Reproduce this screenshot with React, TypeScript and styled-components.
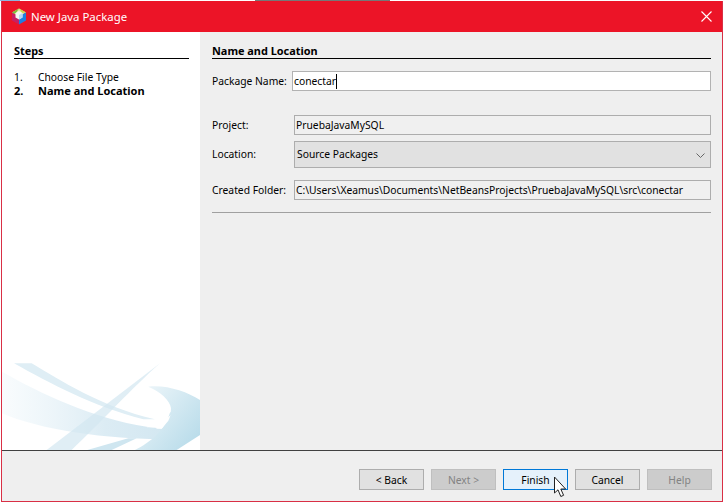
import styled, { createGlobalStyle } from 'styled-components';

const GlobalStyle = createGlobalStyle`
  html, body {
    margin: 0;
    padding: 0;
    width: 725px;
    height: 503px;
    overflow: hidden;
    background: #fff;
  }
  body {
    font-family: 'Noto Sans', 'Liberation Sans', sans-serif;
    font-size: 10.3px;
    color: #000;
  }
`;

const Desktop = styled.div`
  width: 725px;
  height: 503px;
  box-sizing: border-box;
  padding: 1px 2px 1px 1px;
  background:
    linear-gradient(90deg, #8fb4dc 0 20px, #fff 20px 255px, #777 255px 390px, #fff 390px) top left / 725px 1px no-repeat,
    #fff;
`;

const Window = styled.div`
  width: 722px;
  height: 501px;
  box-sizing: border-box;
  display: flex;
  flex-direction: column;
  border: 1px solid #d92f45;
  border-top: 0;
  background: #efefef;
`;

const TitleBar = styled.div`
  height: 31px;
  flex: none;
  display: flex;
  align-items: center;
  gap: 4px;
  padding: 0 10px 0 9px;
  background: #ec1427;
  color: #fff;
  font-size: 11.4px;
`;

const Title = styled.span`
  flex: 1;
`;

const Body = styled.div`
  flex: 1;
  min-height: 0;
  display: flex;
`;

const Sidebar = styled.div`
  width: 198px;
  flex: none;
  display: flex;
  flex-direction: column;
  justify-content: space-between;
  background: #fff;
`;

const StepsBlock = styled.div`
  padding: 11px 11px 0 12px;
`;

const Heading = styled.div`
  height: 15px;
  line-height: 15px;
  font-size: 10.9px;
  font-weight: 700;
  border-bottom: 1px solid #000;
`;

const StepList = styled.ol`
  list-style: none;
  margin: 11px 0 0;
  padding: 0;
`;

const Step = styled.li<{ $active?: boolean }>`
  display: flex;
  height: 14px;
  line-height: 14px;
  font-size: ${p => (p.$active ? '11px' : '10.3px')};
  font-weight: ${p => (p.$active ? 700 : 400)};
`;

const StepNumber = styled.span`
  width: 24px;
`;

const Swoosh = styled.svg`
  display: block;
  width: 198px;
  height: 87px;
`;

const Main = styled.div`
  flex: 1;
  padding: 11px 11px 0 12px;
`;

const Row = styled.div<{ $labelWidth: number; $height: number; $gap: number }>`
  display: grid;
  grid-template-columns: ${p => p.$labelWidth}px 1fr;
  align-items: center;
  height: ${p => p.$height}px;
  margin-top: ${p => p.$gap}px;
`;

const Field = styled.div<{ $editable?: boolean }>`
  height: 100%;
  box-sizing: border-box;
  display: flex;
  align-items: center;
  padding-left: 1px;
  border: 1px solid ${p => (p.$editable ? '#b2b2b2' : '#adadad')};
  background: ${p => (p.$editable ? '#fff' : '#f0f0f0')};
  white-space: nowrap;
`;

const Caret = styled.span`
  width: 1px;
  height: 15px;
  background: #000;
`;

const ComboLabel = styled.span`
  margin-bottom: 2px;
`;

const Combo = styled.div`
  height: 100%;
  box-sizing: border-box;
  display: flex;
  align-items: center;
  justify-content: space-between;
  padding: 0 5px 2px 2px;
  border: 1px solid #adadad;
  background: #e1e1e1;
`;

const Chevron = styled.svg`
  width: 9px;
  height: 5px;
  margin-top: 3px;
`;

const Separator = styled.div`
  height: 1px;
  margin-top: 12px;
  background: #a0a0a0;
`;

const Footer = styled.div`
  height: 51px;
  flex: none;
  box-sizing: border-box;
  position: relative;
  display: flex;
  justify-content: flex-end;
  gap: 7px;
  padding: 18px 10px 0 0;
  border-top: 1px solid #404040;
`;

const Button = styled.div<{ $variant?: 'disabled' | 'focused' }>`
  width: 65px;
  height: 21px;
  box-sizing: border-box;
  display: flex;
  align-items: center;
  justify-content: center;
  border: 1px solid ${p => (p.$variant === 'disabled' ? '#bfbfbf' : p.$variant === 'focused' ? '#0078d7' : '#adadad')};
  background: ${p => (p.$variant === 'disabled' ? '#cccccc' : p.$variant === 'focused' ? '#e5f1fb' : '#e1e1e1')};
  color: ${p => (p.$variant === 'disabled' ? '#838383' : '#000')};
`;

const Cursor = styled.svg`
  position: absolute;
  left: 551px;
  top: 25px;
  width: 14px;
  height: 22px;
`;

const NetBeansIcon = () => (
  <svg width="16" height="17" viewBox="0 0 16 17">
    <path d="M8 0.5 L15 4.5 L8 8.5 L1 4.5 Z" fill="#e8e6a0" />
    <path d="M8 0.5 L1 4.5 L1 7 L5 5 Z" fill="#7ebf3c" />
    <path d="M8 0.5 L15 4.5 L11 5 Z" fill="#c9d64a" />
    <path d="M1 4.5 L8 8.5 L8 16.5 L1 12.5 Z" fill="#c81e63" />
    <path d="M15 4.5 L8 8.5 L8 16.5 L15 12.5 Z" fill="#1f7fe0" />
    <path d="M4.5 5 L8 3 L11.5 5 L11.5 9.5 L8 11.5 L4.5 9.5 Z" fill="#f6f6f2" />
    <path d="M8 7 L11.5 5 L11.5 9.5 L8 11.5 Z" fill="#b9d6f2" />
  </svg>
);

const CloseIcon = () => (
  <svg width="11" height="11" viewBox="0 0 11 11">
    <path d="M0.5 0.5 L10.5 10.5 M10.5 0.5 L0.5 10.5" stroke="#fff" strokeWidth="1.1" />
  </svg>
);

export default function App() {
  return (
    <>
      <GlobalStyle />
      <Desktop>
        <Window>
          <TitleBar>
            <NetBeansIcon />
            <Title>New Java Package</Title>
            <CloseIcon />
          </TitleBar>
          <Body>
            <Sidebar>
              <StepsBlock>
                <Heading>Steps</Heading>
                <StepList>
                  <Step>
                    <StepNumber>1.</StepNumber>Choose File Type
                  </Step>
                  <Step $active>
                    <StepNumber>2.</StepNumber>Name and Location
                  </Step>
                </StepList>
              </StepsBlock>
              <Swoosh viewBox="6 39 594 261">
                <defs>
                  <linearGradient id="band" x1="0" x2="1" y1="0" y2="0">
                    <stop offset="0" stopColor="#e6f2f8" stopOpacity="0.25" />
                    <stop offset="0.6" stopColor="#dcecf4" />
                    <stop offset="1" stopColor="#d2e7f1" />
                  </linearGradient>
                  <linearGradient id="curve" x1="0" x2="1" y1="0" y2="0.8">
                    <stop offset="0" stopColor="#f2f8fb" />
                    <stop offset="1" stopColor="#b9dcea" />
                  </linearGradient>
                </defs>
                <path d="M6 65 C120 130 280 205 440 230 L520 240 L500 268 C320 268 120 240 6 190 Z" fill="url(#band)" />
                <path d="M42 40 L95 40 C180 90 300 170 465 208 L430 208 C280 170 150 100 42 40 Z" fill="#dfeef5" />
                <path d="M480 40 L140 300 L215 300 C300 220 400 110 480 40 Z" fill="#d3e7f1" fillOpacity="0.7" />
                <path d="M445 110 C500 104 560 125 600 150 L600 255 L530 300 L405 300 C450 278 500 240 513 175 C510 150 480 125 445 110 Z" fill="url(#curve)" />
                <path d="M262 300 L385 265 L410 265 L335 300 Z" fill="#cfe6f0" />
                <path d="M340 300 L412 268 L420 268 L352 300 Z" fill="#fff" />
                <path d="M440 232 L512 176 L512 186 L462 232 Z" fill="#fff" />
                <path d="M468 236 L512 195 L505 212 L485 236 Z" fill="#fff" />
              </Swoosh>
            </Sidebar>
            <Main>
              <Heading>Name and Location</Heading>
              <Row $labelWidth={80} $height={20} $gap={12}>
                <span>Package Name:</span>
                <Field $editable>
                  conectar
                  <Caret />
                </Field>
              </Row>
              <Row $labelWidth={82} $height={20} $gap={24}>
                <span>Project:</span>
                <Field>PruebaJavaMySQL</Field>
              </Row>
              <Row $labelWidth={82} $height={27} $gap={6}>
                <ComboLabel>Location:</ComboLabel>
                <Combo>
                  Source Packages
                  <Chevron viewBox="0 0 9 5">
                    <path d="M0.5 0.5 L4.5 4.5 L8.5 0.5" fill="none" stroke="#666" strokeWidth="1" />
                  </Chevron>
                </Combo>
              </Row>
              <Row $labelWidth={82} $height={20} $gap={12}>
                <span>Created Folder:</span>
                <Field>C:\Users\Xeamus\Documents\NetBeansProjects\PruebaJavaMySQL\src\conectar</Field>
              </Row>
              <Separator />
            </Main>
          </Body>
          <Footer>
            <Button>&lt; Back</Button>
            <Button $variant="disabled">Next &gt;</Button>
            <Button $variant="focused">Finish</Button>
            <Button>Cancel</Button>
            <Button $variant="disabled">Help</Button>
            <Cursor viewBox="0 0 14 22">
              <path d="M1.5 1 L1.5 17 L5 13.8 L7.8 20.5 L10.6 19.3 L7.8 13 L12.6 13 Z" fill="#fff" stroke="#222" strokeWidth="1" />
            </Cursor>
          </Footer>
        </Window>
      </Desktop>
    </>
  );
}
